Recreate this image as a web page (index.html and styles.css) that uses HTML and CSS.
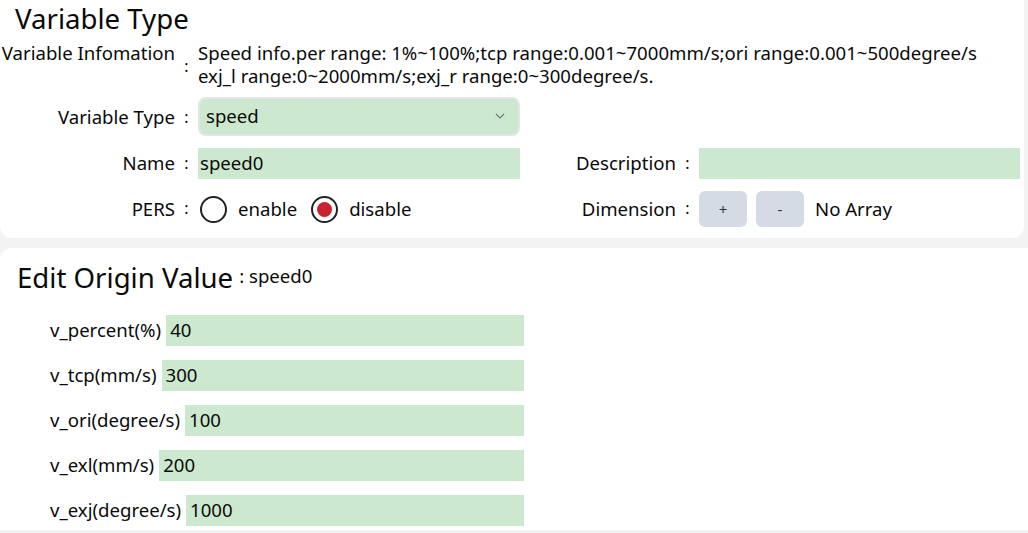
FILE: index.html
```html
<!DOCTYPE html>
<html lang="en">
<head>
    <meta charset="UTF-8">
    <meta name="viewport" content="width=device-width, initial-scale=1.0">
    <title>Variable Type</title>
    <link rel="stylesheet" href="styles.css">
</head>
<body>
    <div class="card card-top">
        <h2 class="title">Variable Type</h2>
        <div class="form">
            <div class="label">Variable Infomation</div>
            <div class="colon colon-mid">:</div>
            <div class="info">Speed info.per range: 1%~100%;tcp range:0.001~7000mm/s;ori range:0.001~500degree/s<br>exj_l range:0~2000mm/s;exj_r range:0~300degree/s.</div>

            <div class="label">Variable Type</div>
            <div class="colon">:</div>
            <div class="select">
                <span>speed</span>
                <svg width="12" height="8" viewBox="0 0 12 8"><path d="M2 2 L6 6 L10 2" fill="none" stroke="#777" stroke-width="1.2"/></svg>
            </div>
            <div></div><div></div><div></div>

            <div class="label">Name</div>
            <div class="colon">:</div>
            <input class="field" type="text" value="speed0">
            <div class="label">Description</div>
            <div class="colon">:</div>
            <input class="field" type="text" value="">

            <div class="label">PERS</div>
            <div class="colon">:</div>
            <div class="radios">
                <span class="radio"></span><span class="radio-text">enable</span>
                <span class="radio checked"></span><span class="radio-text">disable</span>
            </div>
            <div class="label">Dimension</div>
            <div class="colon">:</div>
            <div class="dims">
                <button class="btn">+</button>
                <button class="btn">-</button>
                <span class="dim-text">No Array</span>
            </div>
        </div>
    </div>

    <div class="card card-bottom">
        <div class="head">
            <h2 class="title">Edit Origin Value</h2>
            <span class="sub">: speed0</span>
        </div>
        <div class="values">
            <div class="value-row"><span>v_percent(%)</span><input class="field" type="text" value="40"></div>
            <div class="value-row"><span>v_tcp(mm/s)</span><input class="field" type="text" value="300"></div>
            <div class="value-row"><span>v_ori(degree/s)</span><input class="field" type="text" value="100"></div>
            <div class="value-row"><span>v_exl(mm/s)</span><input class="field" type="text" value="200"></div>
            <div class="value-row"><span>v_exj(degree/s)</span><input class="field" type="text" value="1000"></div>
        </div>
    </div>
</body>
</html>
```

FILE: styles.css
```css
body {
    margin: 0;
    background: #f3f3f3;
    font-family: "Noto Sans", Arial, sans-serif;
    font-size: 18.6px;
    color: #0a0a0a;
}
.card {
    background: #fff;
}
.card-top {
    width: 1024px;
    height: 238px;
    border-radius: 0 0 12px 12px;
}
.card-bottom {
    margin-top: 10px;
    height: 282px;
    border-radius: 12px 0 0 0;
}
.title {
    margin: 0;
    font-size: 27.6px;
    font-weight: normal;
    line-height: 32px;
    padding: 2px 0 2px 15px;
}
.form {
    display: grid;
    grid-template-columns: 175px 23px 322px 156px 23px 321px;
    row-gap: 12px;
    align-items: center;
    margin-top: 2px;
}
.label {
    text-align: right;
    white-space: nowrap;
    padding-bottom: 2px;
}
.colon {
    text-align: center;
    font-size: 16px;
    padding-bottom: 2px;
}
.form > .label:first-child {
    align-self: start;
    line-height: 30px;
}
.colon-mid {
    align-self: center;
    padding-top: 8px;
}
.info {
    grid-column: 3 / 7;
    line-height: 23px;
    padding-top: 3px;
    white-space: nowrap;
}
.select {
    height: 33px;
    border: 2px solid #e4e6e4;
    border-radius: 8px;
    background: #cce8cf;
    display: flex;
    align-items: center;
    justify-content: space-between;
    padding: 0 12px 2px 6px;
    margin-top: -2px;
}
.field {
    height: 31px;
    border: none;
    background: #cce8cf;
    font: inherit;
    color: inherit;
    padding: 0 2px 2px;
    outline: none;
    box-sizing: border-box;
}
.form .field {
    width: 100%;
}
.radios,
.dims {
    display: flex;
    align-items: center;
    height: 36px;
}
.radio {
    width: 23px;
    height: 23px;
    border: 2px solid #222;
    border-radius: 50%;
    margin-left: 2px;
    display: flex;
    align-items: center;
    justify-content: center;
}
.radio.checked::after {
    content: "";
    width: 15px;
    height: 15px;
    border-radius: 50%;
    background: #c8232e;
}
.radio-text {
    margin-left: 11px;
    margin-right: 12px;
    padding-bottom: 2px;
}
.btn {
    width: 48px;
    height: 36px;
    border: none;
    border-radius: 6px;
    background: #d4dbe5;
    color: #333;
    font-family: inherit;
    font-size: 15px;
    margin-right: 9px;
}
.dim-text {
    margin-left: 2px;
    padding-bottom: 2px;
}
.head {
    display: flex;
    align-items: center;
    padding-top: 11px;
}
.head .title {
    padding-left: 17px;
}
.sub {
    margin-left: 6px;
    padding-bottom: 4px;
}
.values {
    display: flex;
    flex-direction: column;
    gap: 14px;
    width: 474px;
    margin-left: 50px;
    margin-top: 20px;
}
.value-row {
    display: flex;
    align-items: center;
    gap: 5px;
}
.value-row span {
    padding-bottom: 2px;
}
.value-row .field {
    flex: 1;
    padding-left: 4px;
}
```
